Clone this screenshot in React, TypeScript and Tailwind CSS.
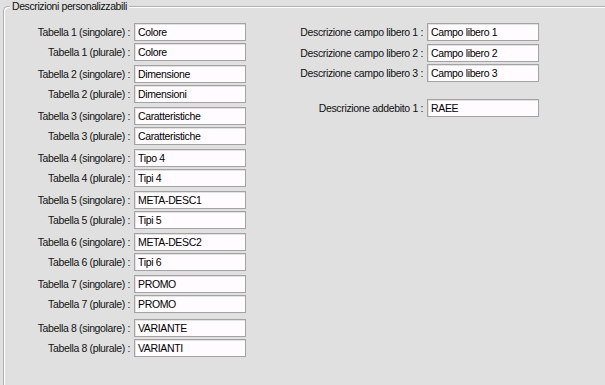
import React from "react";

const left: [string, string][][] = [
  [["Tabella 1 (singolare) :", "Colore"], ["Tabella 1 (plurale) :", "Colore"]],
  [["Tabella 2 (singolare) :", "Dimensione"], ["Tabella 2 (plurale) :", "Dimensioni"]],
  [["Tabella 3 (singolare) :", "Caratteristiche"], ["Tabella 3 (plurale) :", "Caratteristiche"]],
  [["Tabella 4 (singolare) :", "Tipo 4"], ["Tabella 4 (plurale) :", "Tipi 4"]],
  [["Tabella 5 (singolare) :", "META-DESC1"], ["Tabella 5 (plurale) :", "Tipi 5"]],
  [["Tabella 6 (singolare) :", "META-DESC2"], ["Tabella 6 (plurale) :", "Tipi 6"]],
  [["Tabella 7 (singolare) :", "PROMO"], ["Tabella 7 (plurale) :", "PROMO"]],
  [["Tabella 8 (singolare) :", "VARIANTE"], ["Tabella 8 (plurale) :", "VARIANTI"]],
];

function Field({ value }: { value: string }) {
  return (
    <div className="h-[18px] w-[112px] border border-[#a3a3a3] bg-[#fffbff] shadow-[inset_1px_1px_0_#e2e2e2] pl-[3px] text-[10.5px] tracking-[-0.35px] leading-[16px] text-black">
      {value}
    </div>
  );
}

function Row({ label, value, labelW }: { label: string; value: string; labelW: string }) {
  return (
    <div className="flex items-center h-[18px]">
      <div className={`${labelW} text-right pr-[4px] text-[10.5px] tracking-[-0.35px] leading-[16px] text-[#111] whitespace-nowrap`}>{label}</div>
      <Field value={value} />
    </div>
  );
}

export default function App() {
  return (
    <div
      className="w-[605px] h-[385px] bg-[#e0e0e0] overflow-hidden pt-[6px] pl-[3px]"
      style={{ fontFamily: "Tahoma, 'Liberation Sans', Arial, sans-serif" }}
    >
      <div className="relative h-[400px] w-[620px] border-l border-t border-[#b0b0b0] rounded-tl-[5px] shadow-[inset_1px_1px_0_#ffffff]">
        <div className="absolute left-[6px] top-[-7px] px-[2px] bg-[#e0e0e0] text-[10.5px] tracking-[-0.4px] leading-[13px] text-[#111]">
          Descrizioni personalizzabili
        </div>
        <div className="flex pt-[16px]">
          <div className="flex flex-col gap-[4px]">
            {left.map((pair, i) => (
              <div key={i} className={`flex flex-col gap-[2px] ${i === 7 ? "mt-[2px]" : ""}`}>
                {pair.map(([l, v]) => (
                  <Row key={l} label={l} value={v} labelW="w-[130px]" />
                ))}
              </div>
            ))}
          </div>
          <div className="flex flex-col ml-[36px]">
            <div className="flex flex-col gap-[2.5px]">
              <Row label="Descrizione campo libero 1 :" value="Campo libero 1" labelW="w-[145px]" />
              <Row label="Descrizione campo libero 2 :" value="Campo libero 2" labelW="w-[145px]" />
              <Row label="Descrizione campo libero 3 :" value="Campo libero 3" labelW="w-[145px]" />
            </div>
            <div className="mt-[17px]">
              <Row label="Descrizione addebito 1 :" value="RAEE" labelW="w-[145px]" />
            </div>
          </div>
        </div>
      </div>
    </div>
  );
}
